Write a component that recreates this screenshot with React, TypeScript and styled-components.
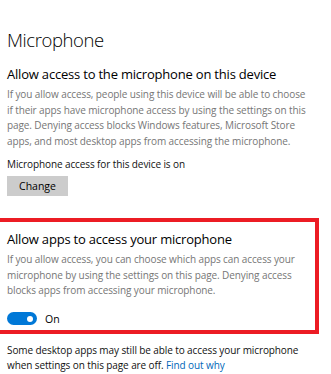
import React from "react";
import styled, { createGlobalStyle } from "styled-components";

const Global = createGlobalStyle`
  html, body { margin: 0; padding: 0; background: #ffffff; }
  body { font-family: "Open Sans", "Noto Sans", sans-serif; color: #000; }
`;

const Page = styled.div`
  width: 331px;
  height: 374px;
  overflow: hidden;
  box-sizing: border-box;
  padding: 27px 0 0 7px;
  display: flex;
  flex-direction: column;
`;

const Title = styled.h1`
  margin: 0;
  font-size: 18.5px;
  font-weight: 300;
  line-height: 26px;
  letter-spacing: -0.4px;
  color: #000;
`;

const Heading = styled.h2<{ $top: number }>`
  margin: ${(p) => p.$top}px 0 0 0;
  font-size: 13px;
  font-weight: 400;
  line-height: 18px;
  letter-spacing: -0.2px;
  color: #000;
  white-space: nowrap;
`;

const Body = styled.p<{ $top: number; $muted?: boolean }>`
  margin: ${(p) => p.$top}px 0 0 0;
  font-size: 10px;
  line-height: 15.6px;
  letter-spacing: -0.1px;
  color: ${(p) => (p.$muted ? "#767676" : "#111")};
  white-space: nowrap;
`;

const Button = styled.button`
  margin-top: 3px;
  width: 61px;
  height: 21px;
  border: none;
  background: #cccccc;
  font-family: inherit;
  font-size: 10.5px;
  color: #000;
  padding: 0;
  align-self: flex-start;
`;

const Highlight = styled.section`
  margin: 22px 0 0 -17px;
  width: 329px;
  box-sizing: border-box;
  border: 4px solid #ec1c24;
  padding: 8px 0 4px 13px;
  display: flex;
  flex-direction: column;
`;

const ToggleRow = styled.div`
  margin-top: 13px;
  display: flex;
  align-items: center;
  gap: 8px;
  height: 14px;
`;

const Track = styled.div<{ $on: boolean }>`
  width: 30px;
  height: 13px;
  border-radius: 7px;
  background: ${(p) => (p.$on ? "#0078d7" : "#fff")};
  display: flex;
  align-items: center;
  justify-content: ${(p) => (p.$on ? "flex-end" : "flex-start")};
  padding: 0 4px;
  box-sizing: border-box;
`;

const Knob = styled.div`
  width: 6px;
  height: 6px;
  border-radius: 50%;
  background: #fff;
`;

const ToggleLabel = styled.span`
  font-size: 10.5px;
  color: #000;
`;

const Link = styled.a`
  color: #0067b8;
  text-decoration: none;
`;

export default function App() {
  return (
    <>
      <Global />
      <Page>
        <Title>Microphone</Title>
        <Heading $top={12}>Allow access to the microphone on this device</Heading>
        <Body $top={4} $muted>
          If you allow access, people using this device will be able to choose
          <br />
          if their apps have microphone access by using the settings on this
          <br />
          page. Denying access blocks Windows features, Microsoft Store
          <br />
          apps, and most desktop apps from accessing the microphone.
        </Body>
        <Body $top={8}>Microphone access for this device is on</Body>
        <Button>Change</Button>
        <Highlight>
          <Heading $top={0}>Allow apps to access your microphone</Heading>
          <Body $top={4} $muted>
            If you allow access, you can choose which apps can access your
            <br />
            microphone by using the settings on this page. Denying access
            <br />
            blocks apps from accessing your microphone.
          </Body>
          <ToggleRow>
            <Track $on>
              <Knob />
            </Track>
            <ToggleLabel>On</ToggleLabel>
          </ToggleRow>
        </Highlight>
        <Body $top={9}>
          Some desktop apps may still be able to access your microphone
          <br />
          when settings on this page are off. <Link href="#">Find out why</Link>
        </Body>
      </Page>
    </>
  );
}
